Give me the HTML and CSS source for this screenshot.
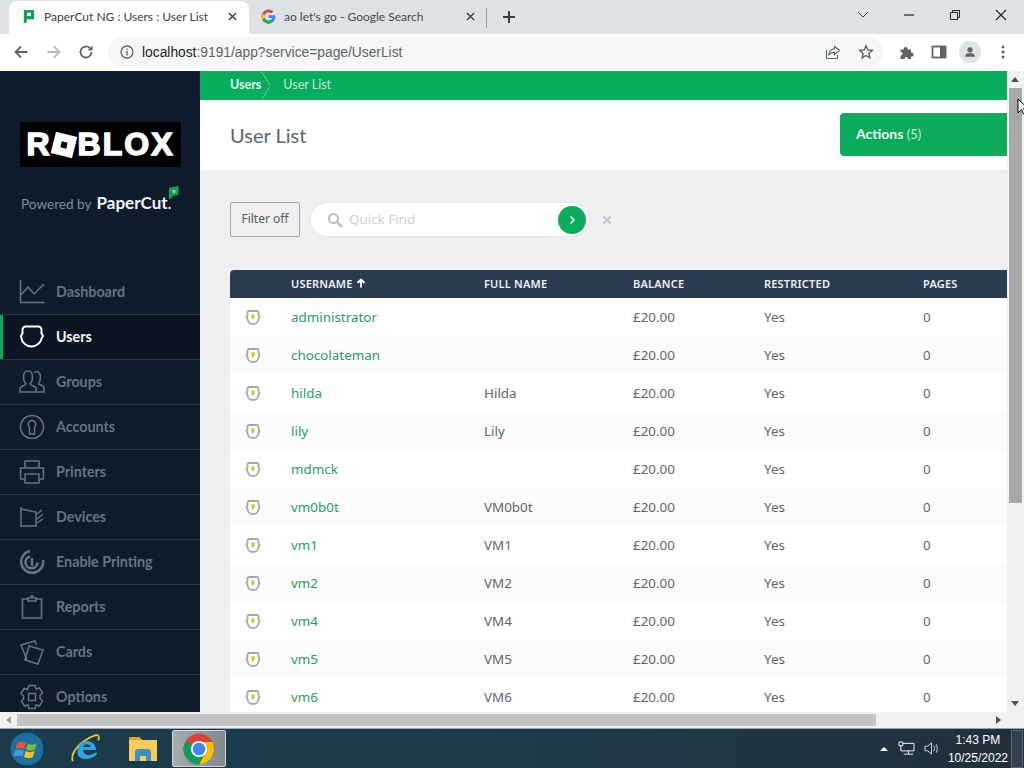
FILE: index.html
```html
<!DOCTYPE html>
<html lang="en">
<head>
    <meta charset="UTF-8">
    <title>PaperCut NG : Users : User List</title>
    <link rel="stylesheet" href="styles.css">
</head>
<body>
    <div class="tabstrip">
        <div class="tab tab-active">
            <svg class="tab-icon" viewBox="0 0 16 16"><path d="M3 1h11v10H7l-1 1v3l-3 0z" fill="#12a150"/><rect x="6.500" y="4" width="4" height="3.500" fill="#fff"/></svg>
            <span class="tab-title">PaperCut NG : Users : User List</span>
            <svg class="tab-close" viewBox="0 0 10 10"><path d="M1 1l8 8M9 1l-8 8" stroke="#3c4043" stroke-width="1.600"/></svg>
        </div>
        <div class="tab">
            <svg class="tab-icon" viewBox="0 0 16 16">
                <path d="M14.700 6.600H8v2.900h3.900c-.4 1.800-2 3-3.900 3a4.500 4.500 0 0 1 0-9c1.100 0 2.100.4 2.900 1.100l2.100-2.100A7.500 7.500 0 1 0 15.500 8c0-.5-.1-1-.8-1.400z" fill="#4285f4"/>
                <path d="M1.400 4.500 3.900 6.300A4.500 4.500 0 0 1 8 3.500c1.100 0 2.100.4 2.900 1.100l2.100-2.100A7.500 7.500 0 0 0 1.400 4.500z" fill="#ea4335"/>
                <path d="M1.400 4.500a7.500 7.500 0 0 0 0 7l2.500-2a4.500 4.500 0 0 1 0-3.200z" fill="#fbbc05"/>
                <path d="M1.400 11.500A7.500 7.500 0 0 0 13 13.600l-2.400-1.900a4.500 4.500 0 0 1-6.700-2.200z" fill="#34a853"/>
            </svg>
            <span class="tab-title">ao let's go - Google Search</span>
            <svg class="tab-close" viewBox="0 0 10 10"><path d="M1 1l8 8M9 1l-8 8" stroke="#3c4043" stroke-width="1.600"/></svg>
        </div>
        <div class="tab-sep"></div>
        <svg class="tab-new" viewBox="0 0 14 14"><path d="M7 1v12M1 7h12" stroke="#3c4043" stroke-width="2"/></svg>
        <div class="window-btns">
            <svg class="win-btn" viewBox="0 0 14 14"><path d="M2 4l5 5 5-5" fill="none" stroke="#3c4043"/></svg>
            <svg class="win-btn" viewBox="0 0 14 14"><path d="M2 7h10" stroke="#222" stroke-width="1.200"/></svg>
            <svg class="win-btn" viewBox="0 0 14 14"><path d="M2.500 4.500h7v7h-7zM4.500 4.500v-2h7v7h-2" fill="none" stroke="#222"/></svg>
            <svg class="win-btn" viewBox="0 0 14 14"><path d="M2 2l10 10M12 2L2 12" stroke="#222" stroke-width="1.100"/></svg>
        </div>
    </div>

    <div class="toolbar">
        <svg class="tool-icon" viewBox="0 0 16 16"><path d="M14.500 8H2.500M8 2.500 2.500 8 8 13.500" fill="none" stroke="#5f6368" stroke-width="1.800"/></svg>
        <svg class="tool-icon tool-forward" viewBox="0 0 16 16"><path d="M1.500 8h12M8 2.500 13.500 8 8 13.500" fill="none" stroke="#b4b7bb" stroke-width="1.800"/></svg>
        <svg class="tool-icon tool-reload" viewBox="0 0 16 16"><path d="M13.500 8a5.500 5.500 0 1 1-1.600-3.900" fill="none" stroke="#5f6368" stroke-width="1.800"/><path d="M14.500 1.500v5h-5z" fill="#5f6368"/></svg>
        <div class="omnibox">
            <svg class="omni-info" viewBox="0 0 14 14"><circle cx="7" cy="7" r="6" fill="none" stroke="#5f6368" stroke-width="1.300"/><path d="M7 6v4.500M7 3.500v1.300" stroke="#5f6368" stroke-width="1.400"/></svg>
            <span class="omni-url"><span class="omni-host">localhost</span>:9191/app?service=page/UserList</span>
            <svg class="omni-action" viewBox="0 0 16 16"><path d="M9.500 2.500 14.500 6.500 9.500 10.500V8.300C6.500 8.300 4.800 9.300 3.500 11.300 4 8 6 5 9.500 4.700zM1.500 6v8.500h11V11" fill="none" stroke="#5f6368" stroke-width="1.100"/></svg>
            <svg class="omni-action" viewBox="0 0 16 16"><path d="M8 1.800 9.800 6l4.500.4-3.400 3 1 4.400L8 11.500l-3.900 2.300 1-4.400-3.400-3L6.200 6z" fill="none" stroke="#5f6368" stroke-width="1.400"/></svg>
        </div>
        <svg class="tool-right" viewBox="0 0 16 16"><path d="M1.500 5.500h3.200c-.6-3.500 4.600-3.500 4 0h3.300v3c3.500-.6 3.500 4.600 0 4v2.500H9c.4-2.800-3.800-2.800-3.400 0H1.500v-3.500c2.800.4 2.800-3.800 0-3.400z" fill="#5f6368"/></svg>
        <svg class="tool-right" viewBox="0 0 16 16"><rect x="1.500" y="2.500" width="13" height="11" fill="none" stroke="#5f6368" stroke-width="1.800"/><rect x="9" y="2.500" width="5" height="11" fill="#5f6368"/></svg>
        <span class="avatar"><svg viewBox="0 0 16 16"><circle cx="8" cy="5.500" r="3" fill="#5f6368"/><path d="M2.500 13c0-5 11-5 11 0v.5h-11z" fill="#5f6368"/></svg></span>
        <svg class="tool-right tool-menu" viewBox="0 0 16 16"><circle cx="8" cy="3" r="1.500" fill="#5f6368"/><circle cx="8" cy="8" r="1.500" fill="#5f6368"/><circle cx="8" cy="13" r="1.500" fill="#5f6368"/></svg>
    </div>

    <div class="viewport">
        <aside class="sidebar">
            <div class="brand">
                <div class="logo">R<span class="logo-o"></span>BLOX</div>
                <div class="powered">
                    Powered by <span class="powered-name">PaperCut<span class="powered-dot">.</span></span>
                    <svg class="powered-leaf" viewBox="0 0 11 13"><path d="M2 1.500 10.500 0v7.500c0 1-1 2-2 2H5L3 12.500 1 13V3c0-.8.300-1.300 1-1.500z" fill="#12a150"/><circle cx="6" cy="5.500" r="1.800" fill="#7fd3a4"/></svg>
                </div>
            </div>
            <nav class="nav">
                <a class="nav-item"><svg class="nav-icon" viewBox="0 0 26 26"><path d="M1.500 1v22.500h24M2 16l7-8 6 7 10-10" /></svg>Dashboard</a>
                <a class="nav-item nav-active"><svg class="nav-icon" viewBox="0 0 26 26"><path d="M7 2.500h12c2 0 3.500 1 3.500 3.500v3.500l1.500 2.500-1.500 2.500c-.5 4-5 8-10 8s-9.500-4-10-8L2 12l1.500-2.500V6C3.500 3.500 5 2.500 7 2.500z" /></svg>Users</a>
                <a class="nav-item"><svg class="nav-icon" viewBox="0 0 26 26"><path d="M1 23v-4c0-2 5-2 6-4-2-2-2.500-4-2.500-7C4.500 4 6.500 2 9 2s4.500 2 4.500 6c0 3-.5 5-2.500 7 1 2 6 2 6 4v4zM15 3.500c3-2.500 6.500 0 6.500 4.500 0 2.500-.5 5-2 6.500 1 1.500 5.500 2 5.500 4.500v4h-8" /></svg>Groups</a>
                <a class="nav-item"><svg class="nav-icon" viewBox="0 0 26 26"><circle cx="13" cy="13" r="11.500" /><path d="M10.500 20v-6.500c-2.500-2.500-1-7 2.500-7s5 4.500 2.500 7V20z" /></svg>Accounts</a>
                <a class="nav-item"><svg class="nav-icon" viewBox="0 0 26 26"><path d="M6 9V2h14v7M6 20H1.500V9h23v11H20M6 15h14v9H6z" /></svg>Printers</a>
                <a class="nav-item"><svg class="nav-icon" viewBox="0 0 26 26"><path d="M2 5 17 8v15M2 3v20M1 22h16M18 15l6-5M18 19l6-4M18 10l5-4" /></svg>Devices</a>
                <a class="nav-item"><svg class="nav-icon nav-icon-heavy" viewBox="0 0 26 26"><path d="M11 2a11 11 0 1 0 13 9M11 7.500a6 6 0 1 0 7.500 6M13 9v7h-1" /></svg>Enable Printing</a>
                <a class="nav-item"><svg class="nav-icon" viewBox="0 0 26 26"><path d="M9 5H3.500v19h19V5H17M9 7V4h3V2h2v2h3v3z" /></svg>Reports</a>
                <a class="nav-item"><svg class="nav-icon" viewBox="0 0 26 26"><path d="M8 21 2 6l14-4 1.500 4M10 7l14 4-5 14L6 21z" /></svg>Cards</a>
                <a class="nav-item"><svg class="nav-icon" viewBox="0 0 26 26"><path d="M10 1.500h6l1 3.500 3.500-1 3 5-2.500 2.500v3l2.500 2.500-3 5-3.500-1-1 3.500h-6l-1-3.500-3.500 1-3-5L4.500 15v-3L2 9.500l3-5 3.500 1z" /><rect x="9.500" y="9.500" width="7" height="7" /></svg>Options</a>
            </nav>
        </aside>

        <main class="content">
            <div class="crumbs">
                <span class="crumb-root">Users</span>
                <span class="crumb-arrow"></span>
                <span class="crumb-page">User List</span>
            </div>
            <header class="title-bar">
                <h1>User List</h1>
                <button class="actions-btn">Actions <span class="actions-count">(5)</span></button>
            </header>
            <section class="body-area">
                <div class="filters">
                    <button class="filter-btn">Filter off</button>
                    <div class="quick-find">
                        <svg class="qf-search" viewBox="0 0 16 16"><circle cx="6.500" cy="6.500" r="4.500" fill="none" stroke="#b9bec3" stroke-width="2"/><path d="M10 10l5 5" stroke="#b9bec3" stroke-width="2.400"/></svg>
                        <span class="qf-text">Quick Find</span>
                        <span class="qf-go"><svg viewBox="0 0 10 10"><path d="M3.500 1.500 7 5 3.500 8.500" fill="none" stroke="#fff" stroke-width="1.600"/></svg></span>
                    </div>
                    <svg class="qf-clear" viewBox="0 0 10 10"><path d="M1.500 1.500l7 7M8.500 1.500l-7 7" stroke="#c3c7cb" stroke-width="2"/></svg>
                </div>
                <table class="users">
                    <colgroup>
                        <col class="col-icon"><col class="col-user"><col class="col-name"><col class="col-bal"><col class="col-res"><col class="col-pages">
                    </colgroup>
                    <thead>
                        <tr><th></th><th>USERNAME <svg class="sort-arrow" viewBox="0 0 10 10"><path d="M5 9.500V2M1.500 5 5 1.500 8.500 5" fill="none" stroke="#fff" stroke-width="1.800"/></svg></th><th>FULL NAME</th><th>BALANCE</th><th>RESTRICTED</th><th>PAGES</th></tr>
                    </thead>
                    <tbody>
                        <tr><td><svg class="badge" viewBox="0 0 16 16"><use href="#shield"/></svg></td><td><a>administrator</a></td><td></td><td>£20.00</td><td>Yes</td><td>0</td></tr>
                        <tr><td><svg class="badge" viewBox="0 0 16 16"><use href="#shield"/></svg></td><td><a>chocolateman</a></td><td></td><td>£20.00</td><td>Yes</td><td>0</td></tr>
                        <tr><td><svg class="badge" viewBox="0 0 16 16"><use href="#shield"/></svg></td><td><a>hilda</a></td><td>Hilda</td><td>£20.00</td><td>Yes</td><td>0</td></tr>
                        <tr><td><svg class="badge" viewBox="0 0 16 16"><use href="#shield"/></svg></td><td><a>lily</a></td><td>Lily</td><td>£20.00</td><td>Yes</td><td>0</td></tr>
                        <tr><td><svg class="badge" viewBox="0 0 16 16"><use href="#shield"/></svg></td><td><a>mdmck</a></td><td></td><td>£20.00</td><td>Yes</td><td>0</td></tr>
                        <tr><td><svg class="badge" viewBox="0 0 16 16"><use href="#shield"/></svg></td><td><a>vm0b0t</a></td><td>VM0b0t</td><td>£20.00</td><td>Yes</td><td>0</td></tr>
                        <tr><td><svg class="badge" viewBox="0 0 16 16"><use href="#shield"/></svg></td><td><a>vm1</a></td><td>VM1</td><td>£20.00</td><td>Yes</td><td>0</td></tr>
                        <tr><td><svg class="badge" viewBox="0 0 16 16"><use href="#shield"/></svg></td><td><a>vm2</a></td><td>VM2</td><td>£20.00</td><td>Yes</td><td>0</td></tr>
                        <tr><td><svg class="badge" viewBox="0 0 16 16"><use href="#shield"/></svg></td><td><a>vm4</a></td><td>VM4</td><td>£20.00</td><td>Yes</td><td>0</td></tr>
                        <tr><td><svg class="badge" viewBox="0 0 16 16"><use href="#shield"/></svg></td><td><a>vm5</a></td><td>VM5</td><td>£20.00</td><td>Yes</td><td>0</td></tr>
                        <tr><td><svg class="badge" viewBox="0 0 16 16"><use href="#shield"/></svg></td><td><a>vm6</a></td><td>VM6</td><td>£20.00</td><td>Yes</td><td>0</td></tr>
                    </tbody>
                </table>
            </section>
        </main>

        <div class="scroll-v">
            <span class="arrow-up"></span>
            <span class="thumb-v"></span>
            <span class="arrow-down"></span>
        </div>
        <svg class="cursor" viewBox="0 0 10 17"><path d="M1 1v14l3.500-3.500 2 4.500 2-1-2-4.500H11z" fill="#fff" stroke="#000"/></svg>
    </div>

    <div class="scroll-h">
        <span class="arrow-left"></span>
        <span class="thumb-h"></span>
        <span class="arrow-right"></span>
    </div>

    <footer class="taskbar">
        <svg class="start-orb" viewBox="0 0 36 36">
            <circle cx="18" cy="18" r="17" fill="#1d6f9e" stroke="#0d3a55"/>
            <path d="M8 12c3-2 6-2 9 0l-1.500 6c-3-1.500-6-1.500-9 0z" fill="#e8572a"/>
            <path d="M18.500 12.500c3 1.500 6 1.500 9 0L26 18.500c-3 1.500-6 1.500-9 0z" fill="#7cb93a"/>
            <path d="M6 19.500c3-1.500 6-1.500 9 0L13.500 25.500c-3-1.500-6-1.500-9 0z" fill="#3a9fe0"/>
            <path d="M16.500 20c3 1.500 6 1.500 9 0L24 26c-3 1.500-6 1.500-9 0z" fill="#f5c02c"/>
        </svg>
        <svg class="task-ie" viewBox="0 0 34 34">
            <path d="M3 30C0 22 10 8 28 2c3 0 3 3 2 6" fill="none" stroke="#e8c22c" stroke-width="2"/>
            <path d="M8 19a10 10 0 0 1 20-1H14c0 6 8 7 12 3h3c-3 9-23 9-21-2z" fill="#2aa7e0"/>
            <path d="M14 15h8c-1-4-7-4-8 0z" fill="#0d3a55"/>
        </svg>
        <svg class="task-folder" viewBox="0 0 30 26">
            <path d="M1 1h10l3 3h15v21H1z" fill="#f7cd58"/>
            <path d="M1 1h10l3 3H1z" fill="#e0a52c"/>
            <path d="M7 25v-9c0-2 2-3 3-3h10c1 0 3 1 3 3v9h-5v-5h-6v5z" fill="#3f8fc9"/>
        </svg>
        <div class="task-chrome">
            <svg viewBox="0 0 32 32">
                <circle cx="16" cy="16" r="15.500" fill="#db4437"/>
                <path d="M2.600 8.200A15.500 15.500 0 0 0 16 31.500L23 19 16 16z" fill="#0f9d58"/>
                <path d="M16 9h13.400A15.500 15.500 0 0 1 16 31.500L23 19z" fill="#f4c20d"/>
                <circle cx="16" cy="16" r="8" fill="#fff"/>
                <circle cx="16" cy="16" r="6.300" fill="#4285f4"/>
            </svg>
        </div>
        <div class="tray">
            <span class="tray-up"></span>
            <svg class="tray-net" viewBox="0 0 18 16"><path d="M5 2.500h12v8H5M1 1h4v4H1zM3 5v5.500h2M11 10.500v3M6 14h10" fill="none" stroke="#fff"/></svg>
            <svg class="tray-vol" viewBox="0 0 16 16"><path d="M1 5.500h3L8 2v12L4 10.500H1zM10.500 5c1 2 1 4 0 6M13 3.500c1.500 3 1.500 6 0 9" fill="none" stroke="#d7dde2"/></svg>
            <div class="clock"><span>1:43 PM</span><span>10/25/2022</span></div>
            <span class="show-desktop"></span>
        </div>
    </footer>

    <svg class="defs" width="0" height="0">
        <symbol id="shield" viewBox="0 0 16 16">
            <path d="M4 2h8c1 0 1.500.5 1.500 1.500V6l1 2-1 2c0 3-2.500 5-5.500 5s-5.500-2-5.500-5l-1-2 1-2V3.500C2.500 2.500 3 2 4 2z" fill="#fff" stroke="#a5a9ac" stroke-width="1.800"/>
            <circle cx="8" cy="7" r="1.900" fill="#d8d01e"/>
            <path d="M7.400 8h1.200v2.500H7.400z" fill="#a5a21e"/>
        </symbol>
    </svg>
</body>
</html>
```

FILE: styles.css
```css
* {
    box-sizing: border-box;
}

html, body {
    margin: 0;
    padding: 0;
    height: 768px;
    overflow: hidden;
}

body {
    display: flex;
    flex-direction: column;
    font-family: Lato, "Noto Sans", sans-serif;
    background-color: #fff;
}

.defs {
    position: absolute;
}

/* browser tabs */
.tabstrip {
    display: flex;
    align-items: flex-end;
    height: 34px;
    padding-left: 9px;
    background-color: #dee1e6;
    flex-shrink: 0;
}

.tab {
    display: flex;
    align-items: center;
    width: 238px;
    height: 33px;
    padding: 0 12px 2px 12px;
    font-family: Lato, sans-serif;
    font-size: 12px;
    color: #45494d;
}

.tab-active {
    width: 240px;
    background-color: #fff;
    border-radius: 8px 8px 0 0;
    color: #3c4043;
}

.tab-icon {
    width: 15px;
    height: 15px;
    margin-right: 8px;
    flex-shrink: 0;
}

.tab-title {
    flex: 1;
    white-space: nowrap;
    overflow: hidden;
}

.tab-close {
    width: 9px;
    height: 9px;
}

.tab-sep {
    width: 1px;
    height: 20px;
    margin: 0 0 6px -1px;
    background-color: #9aa0a6;
}

.tab-new {
    width: 14px;
    height: 14px;
    margin: 0 0 10px 15px;
}

.window-btns {
    display: flex;
    align-items: center;
    gap: 32px;
    height: 29px;
    margin-left: auto;
    margin-right: 16px;
    align-self: flex-start;
}

.win-btn {
    width: 14px;
    height: 14px;
}

/* browser toolbar */
.toolbar {
    display: flex;
    align-items: center;
    height: 37px;
    padding: 0 0 1px 13px;
    background-color: #fff;
    flex-shrink: 0;
}

.tool-icon {
    width: 16px;
    height: 16px;
    margin-right: 17px;
}

.tool-forward {
    margin-right: 16px;
}

.tool-reload {
    margin-right: 14px;
}

.omnibox {
    display: flex;
    align-items: center;
    width: 775px;
    height: 30px;
    padding: 0 9px 0 12px;
    border-radius: 15px;
    background-color: #f4f6f8;
}

.omni-info {
    width: 14px;
    height: 14px;
    margin-right: 8px;
}

.omni-url {
    flex: 1;
    font-family: "Liberation Sans", sans-serif;
    font-size: 13.800px;
    color: #5f6368;
}

.omni-host {
    color: #202124;
}

.omni-action {
    width: 16px;
    height: 16px;
    margin-left: 17px;
}

.tool-right {
    width: 16px;
    height: 16px;
    margin-left: 16px;
}

.avatar {
    display: flex;
    align-items: center;
    justify-content: center;
    width: 22px;
    height: 22px;
    margin-left: 12px;
    border-radius: 50%;
    background-color: #dee1e6;
}

.avatar svg {
    width: 14px;
    height: 14px;
}

.tool-menu {
    margin-left: 14px;
}

/* page area */
.viewport {
    position: relative;
    display: flex;
    height: 641px;
    overflow: hidden;
    flex-shrink: 0;
}

.sidebar {
    width: 200px;
    flex-shrink: 0;
    background-color: #0f1c2c;
}

.brand {
    height: 199px;
    padding: 51px 19px 0 20px;
}

.logo {
    display: flex;
    align-items: center;
    justify-content: center;
    height: 45px;
    background-color: #000;
    font-family: "Liberation Sans", sans-serif;
    font-weight: 700;
    font-size: 32px;
    letter-spacing: 2px;
    color: #fff;
    -webkit-text-stroke: 1.500px #fff;
}

.logo-o {
    position: relative;
    width: 22px;
    height: 22px;
    margin: 0 3px 0 1px;
    background-color: #fff;
    transform: rotate(14deg);
}

.logo-o::after {
    content: "";
    position: absolute;
    top: 8px;
    left: 8px;
    width: 6px;
    height: 6px;
    background-color: #000;
}

.powered {
    position: relative;
    display: flex;
    align-items: baseline;
    gap: 5px;
    margin-top: 25px;
    margin-left: 1px;
    font-size: 13.600px;
    color: #7f8b96;
    white-space: nowrap;
}

.powered-name {
    font-size: 17px;
    font-weight: 700;
    color: #f2f4f5;
}

.powered-dot {
    font-weight: 400;
}

.powered-leaf {
    position: absolute;
    top: -6px;
    left: 147px;
    width: 11px;
    height: 13px;
}

.nav-item {
    display: flex;
    align-items: center;
    height: 45px;
    padding: 0 0 2px 19px;
    border-bottom: 1px solid #263444;
    font-size: 14.300px;
    font-weight: 700;
    color: #67747f;
}

.nav-active {
    background-color: #0c1623;
    box-shadow: inset 3px 0 0 #0bab5c;
    color: #f5f7f8;
}

.nav-icon {
    width: 26px;
    height: 26px;
    margin: 2px 11px 0 0;
    fill: none;
    stroke: #67747f;
    stroke-width: 1.500;
    flex-shrink: 0;
}

.nav-active .nav-icon {
    stroke: #fff;
    stroke-width: 2;
}

.nav-icon-heavy {
    stroke-width: 2.600;
}

/* main column */
.content {
    width: 807px;
    flex-shrink: 0;
    overflow: hidden;
    background-color: #edeff1;
}

.crumbs {
    display: flex;
    align-items: center;
    height: 29px;
    padding: 0 0 2px 30px;
    background-color: #05ad5d;
    font-size: 12.500px;
}

.crumb-root {
    font-weight: 700;
    color: #e9f7ef;
}

.crumb-arrow {
    width: 9px;
    height: 29px;
    margin: 2px 13px 0 0;
    background: linear-gradient(to top right, transparent 47%, #46c486 47%, #46c486 55%, transparent 55%) top / 100% 50% no-repeat,
        linear-gradient(to bottom right, transparent 47%, #46c486 47%, #46c486 55%, transparent 55%) bottom / 100% 50% no-repeat;
}

.crumb-page {
    color: #c4ecd6;
}

.title-bar {
    display: flex;
    align-items: center;
    justify-content: space-between;
    height: 70px;
    padding-left: 30px;
    background-color: #fff;
}

.title-bar h1 {
    margin: 0;
    font-size: 20px;
    font-weight: 400;
    color: #5d666e;
}

.actions-btn {
    width: 167px;
    height: 43px;
    margin-top: -1px;
    padding: 0 0 3px 16px;
    border: 0;
    border-radius: 4px 0 0 4px;
    background-color: #0bab5c;
    font-family: Lato, sans-serif;
    font-size: 14px;
    font-weight: 700;
    color: #eef9f3;
    text-align: left;
}

.actions-count {
    font-size: 13px;
    font-weight: 400;
    color: #c4ecd6;
}

.body-area {
    padding: 32px 0 0 30px;
}

.filters {
    display: flex;
    align-items: center;
    height: 35px;
}

.filter-btn {
    width: 70px;
    height: 35px;
    padding-bottom: 3px;
    border: 1px solid #a6a9ac;
    border-radius: 2px;
    background-color: #edeff1;
    font-family: "Noto Sans", sans-serif;
    font-size: 12px;
    color: #555c62;
}

.quick-find {
    display: flex;
    align-items: center;
    width: 280px;
    height: 35px;
    margin-left: 10px;
    padding: 0 3px 0 16px;
    border: 1px solid #e3e5e7;
    border-radius: 18px;
    background-color: #fff;
}

.qf-search {
    width: 16px;
    height: 16px;
    margin-right: 6px;
}

.qf-text {
    flex: 1;
    padding-bottom: 2px;
    font-family: "Noto Sans", sans-serif;
    font-size: 13.400px;
    color: #cdd1d4;
}

.qf-go {
    display: flex;
    align-items: center;
    justify-content: center;
    width: 28px;
    height: 28px;
    border-radius: 50%;
    background-color: #0bab5c;
}

.qf-go svg {
    width: 10px;
    height: 10px;
}

.qf-clear {
    width: 10px;
    height: 10px;
    margin-left: 12px;
}

.users {
    width: 777px;
    margin-top: 33px;
    table-layout: fixed;
    border-collapse: collapse;
    font-family: "Noto Sans", sans-serif;
    font-size: 13.400px;
    color: #5d666e;
}

.col-icon { width: 61px; }
.col-user { width: 193px; }
.col-name { width: 149px; }
.col-bal { width: 131px; }
.col-res { width: 159px; }
.col-pages { width: 84px; }

.users th {
    height: 28px;
    padding: 0 0 2px;
    background-color: #2a3d50;
    font-size: 11px;
    font-weight: 600;
    letter-spacing: .2px;
    color: #eef1f3;
    text-align: left;
}

.users th:first-child {
    border-radius: 4px 0 0 0;
}

.users td {
    height: 38px;
    padding: 0;
    background-color: #fff;
}

.users tr:nth-child(even) td {
    background-color: #fbfbfc;
}

.users a {
    color: #2a9a68;
}

.sort-arrow {
    width: 10px;
    height: 10px;
}

.badge {
    display: block;
    width: 16px;
    height: 16px;
    margin: 0 0 0 15px;
}

/* scrollbars */
.scroll-v {
    position: relative;
    flex: 1;
    background-color: #f1f1f1;
}

.thumb-v {
    position: absolute;
    top: 17px;
    left: 2px;
    width: 13px;
    height: 415px;
    background-color: #a8a8a8;
}

.arrow-up {
    position: absolute;
    top: 6px;
    left: 4px;
    border: 4px solid transparent;
    border-top: 0;
    border-bottom: 5px solid #505050;
}

.arrow-down {
    position: absolute;
    bottom: 6px;
    left: 4px;
    border: 4px solid transparent;
    border-bottom: 0;
    border-top: 5px solid #505050;
}

.cursor {
    position: absolute;
    top: 27px;
    left: 1017px;
    width: 10px;
    height: 17px;
}

.scroll-h {
    position: relative;
    height: 16px;
    background-color: #f1f1f1;
    flex-shrink: 0;
}

.thumb-h {
    position: absolute;
    top: 2px;
    left: 17px;
    width: 859px;
    height: 12px;
    background-color: #c4c4c4;
}

.arrow-left {
    position: absolute;
    top: 4px;
    left: 6px;
    border: 4px solid transparent;
    border-left: 0;
    border-right: 5px solid #a0a0a0;
}

.arrow-right {
    position: absolute;
    top: 4px;
    left: 996px;
    border: 4px solid transparent;
    border-right: 0;
    border-left: 5px solid #505050;
}

/* windows taskbar */
.taskbar {
    display: flex;
    align-items: center;
    flex: 1;
    padding-left: 9px;
    border-top: 1px solid #9aa5ad;
    background: linear-gradient(to right, #1b3b4d, #1c3c4e 40%, #22303b);
}

.start-orb {
    width: 36px;
    height: 36px;
}

.task-ie {
    width: 32px;
    height: 32px;
    margin-left: 25px;
}

.task-folder {
    width: 30px;
    height: 26px;
    margin-left: 26px;
}

.task-chrome {
    display: flex;
    align-items: center;
    justify-content: center;
    width: 54px;
    height: 37px;
    margin-left: 14px;
    border: 1px solid #d0d5d8;
    border-radius: 2px;
    background: linear-gradient(to right, #a5adb1, #7f898e);
}

.task-chrome svg {
    width: 32px;
    height: 32px;
}

.tray {
    display: flex;
    align-items: center;
    height: 100%;
    margin-left: auto;
}

.tray-up {
    border: 4px solid transparent;
    border-top: 0;
    border-bottom: 4px solid #fff;
}

.tray-net {
    width: 17px;
    height: 15px;
    margin-left: 10px;
}

.tray-vol {
    width: 15px;
    height: 15px;
    margin-left: 9px;
}

.clock {
    display: flex;
    flex-direction: column;
    align-items: center;
    gap: 4px;
    margin-left: 9px;
    font-family: "Liberation Sans", sans-serif;
    font-size: 12px;
    color: #fff;
}

.show-desktop {
    width: 12px;
    height: 38px;
    margin: 0 1px 0 3px;
    border: 1px solid #5b6770;
    background-color: #33414c;
}
```
